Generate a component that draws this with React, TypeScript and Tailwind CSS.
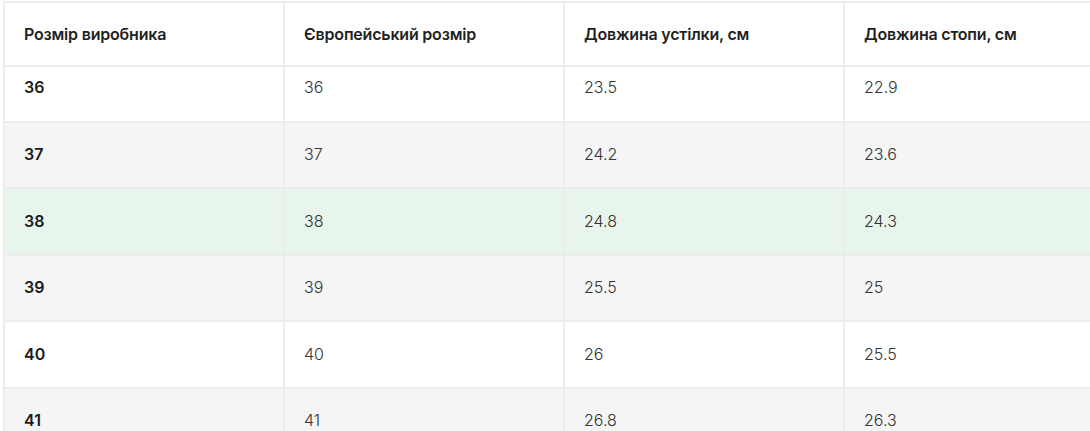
import React from "react";

const rows = [
  { a: "36", b: "36", c: "23.5", d: "22.9", bg: "bg-white", h: "h-[56px]", first: true },
  { a: "37", b: "37", c: "24.2", d: "23.6", bg: "bg-[#f5f5f5]", h: "h-[66px]" },
  { a: "38", b: "38", c: "24.8", d: "24.3", bg: "bg-[#e7f5ec]", h: "h-[67px]" },
  { a: "39", b: "39", c: "25.5", d: "25", bg: "bg-[#f5f5f5]", h: "h-[66px]" },
  { a: "40", b: "40", c: "26", d: "25.5", bg: "bg-white", h: "h-[67px]" },
  { a: "41", b: "41", c: "26.8", d: "26.3", bg: "bg-[#f5f5f5]", h: "h-[66px]" },
];

export default function App() {
  return (
    <div
      className="w-[1090px] h-[431px] overflow-hidden bg-white pl-[3px] pt-[1px]"
      style={{ fontFamily: "Inter, 'Noto Sans', sans-serif" }}
    >
      <div className="w-[1120px] border-t-2 border-[#ececec]">
        <div className="grid grid-cols-[280px_280px_280px_280px] h-[64px] bg-white border-b-2 border-[#ececec]">
          {["Розмір виробника", "Європейський розмір", "Довжина устілки, см", "Довжина стопи, см"].map((t) => (
            <div
              key={t}
              className="border-l-2 border-[#ececec] pl-[19px] flex items-center text-[16px] font-semibold text-[#1f1f1f] tracking-[-0.2px]"
            >
              {t}
            </div>
          ))}
        </div>
        {rows.map((r) => (
          <div
            key={r.a}
            className={`grid grid-cols-[280px_280px_280px_280px] ${r.h} ${r.bg} border-b-2 border-[#ececec]`}
          >
            {[r.a, r.b, r.c, r.d].map((v, i) => (
              <div
                key={i}
                className={`border-l-2 border-[#ececec] pl-[19px] flex ${
                  r.first ? "items-start pt-[8px]" : "items-center pb-[2px]"
                } text-[16px] ${
                  i === 0 ? "font-semibold text-[#1a1a1a]" : "font-light text-[#333333]"
                }`}
              >
                {v}
              </div>
            ))}
          </div>
        ))}
      </div>
    </div>
  );
}
